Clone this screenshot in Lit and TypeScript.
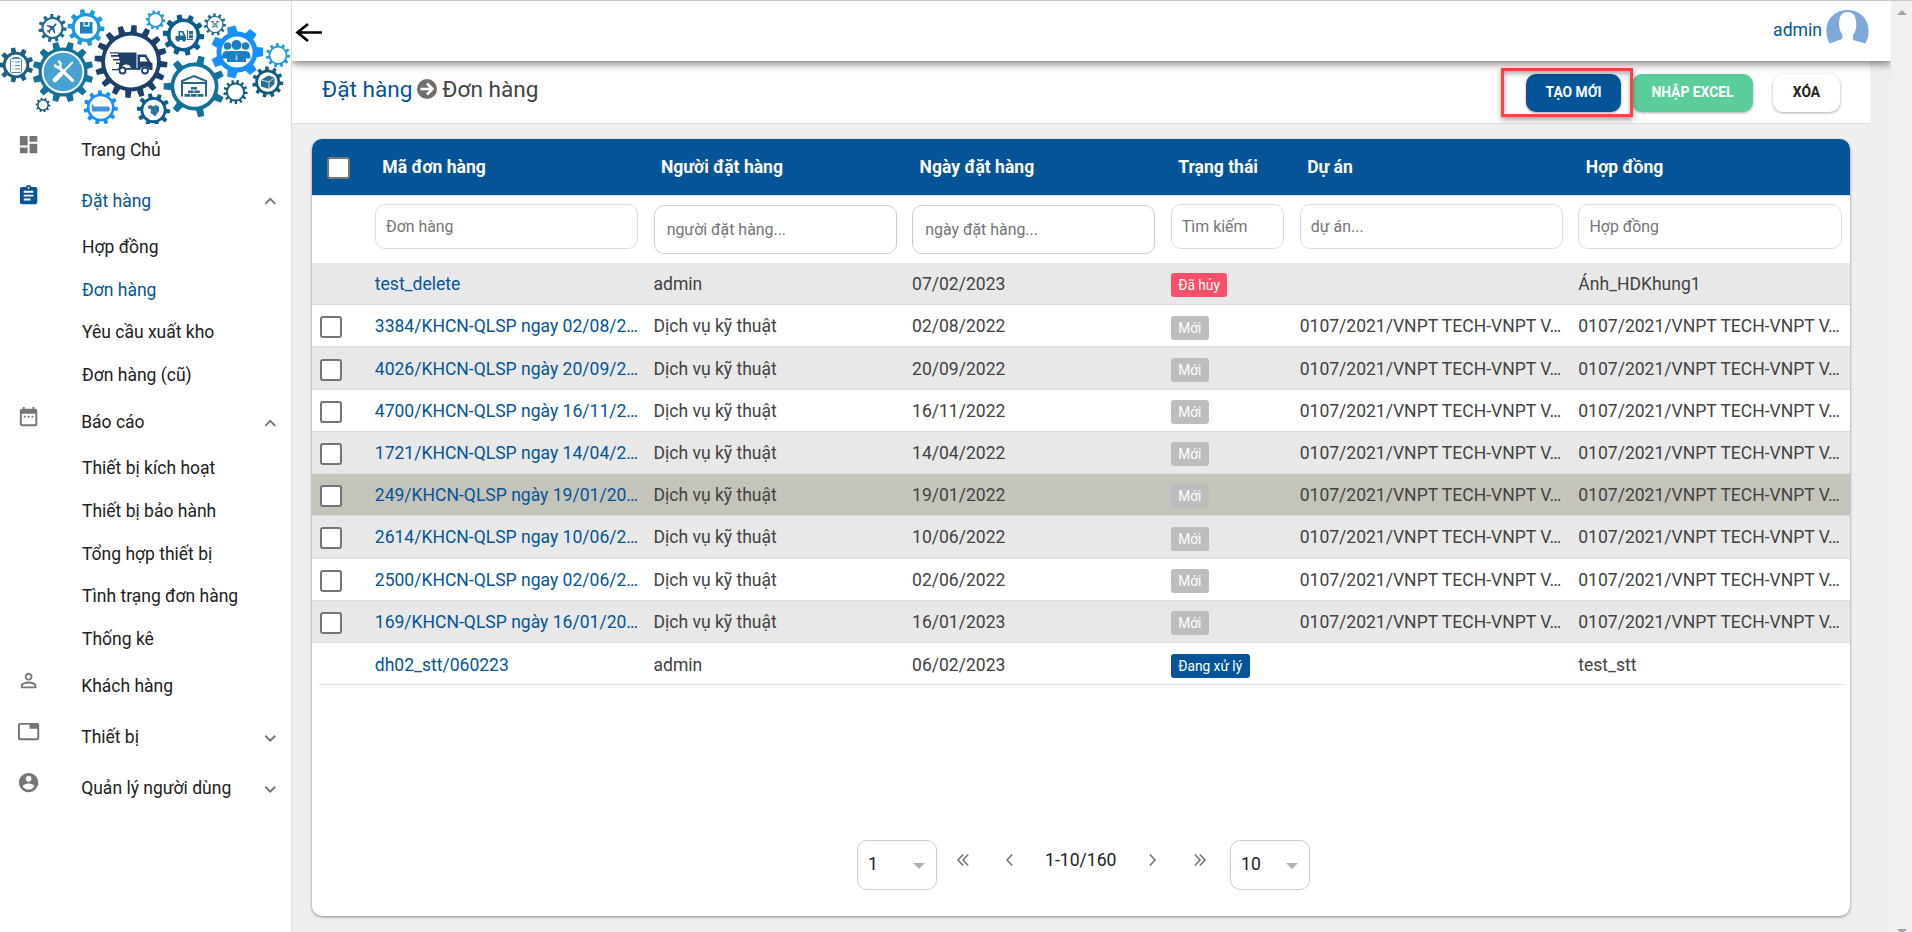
import { LitElement, html, svg, css, nothing } from "lit";
import { customElement, property } from "lit/decorators.js";
import { classMap } from "lit/directives/class-map.js";

/* ---------- logo ---------- */

interface Gear {
  x: number; y: number; r: number; body: number; hole: number; teeth: number; color: string; turn?: number; width?: number;
}

const GEARS: Gear[] = [
  { x: 16, y: 65, r: 17.5, body: 13.3, hole: 10.4, teeth: 9, color: "#1f5f86", turn: 20 },
  { x: 52.5, y: 28, r: 14.2, body: 11, hole: 9, teeth: 11, color: "#1f6a93" },
  { x: 86, y: 27.5, r: 18.5, body: 14.5, hole: 11.3, teeth: 10, color: "#1c9bdc" },
  { x: 63, y: 72, r: 30.5, body: 24.5, hole: 21.3, teeth: 12, color: "#14719a", turn: 15 },
  { x: 131, y: 61.5, r: 36.5, body: 29.8, hole: 26, teeth: 16, color: "#1c4068" },
  { x: 155.5, y: 20, r: 9.8, body: 7.6, hole: 6, teeth: 10, color: "#1c9bdc" },
  { x: 183.5, y: 35, r: 20.8, body: 16.5, hole: 13, teeth: 10, color: "#0b5c8c" },
  { x: 215, y: 24.5, r: 11.2, body: 8.6, hole: 7.4, teeth: 11, color: "#1f6a86" },
  { x: 237, y: 52, r: 26.5, body: 20.5, hole: 15.6, teeth: 7, color: "#1590ff", turn: 0 },
  { x: 278, y: 55.3, r: 12.2, body: 9.4, hole: 7.7, teeth: 11, color: "#1c9bdc" },
  { x: 194.5, y: 86.5, r: 31, body: 24, hole: 20.3, teeth: 7, color: "#14719a", turn: 26, width: 0.62 },
  { x: 235.5, y: 92, r: 12.2, body: 9.4, hole: 7.6, teeth: 13, color: "#14597e" },
  { x: 267.7, y: 82, r: 15.6, body: 12.4, hole: 9.8, teeth: 11, color: "#14597e" },
  { x: 100.7, y: 107.5, r: 17.2, body: 13.8, hole: 11.2, teeth: 11, color: "#1590ff" },
  { x: 153.5, y: 110, r: 16.8, body: 13, hole: 10.3, teeth: 10, color: "#0b5c8c" },
  { x: 43, y: 105, r: 7.4, body: 5.8, hole: 4.4, teeth: 10, color: "#14597e" },
];

function gearPath(g: Gear): string {
  const pts: string[] = [];
  const step = (Math.PI * 2) / g.teeth;
  const start = ((g.turn ?? 5) * Math.PI) / 180;
  const w = g.width ?? 1;
  const at = (r: number, a: number) => `${(g.x + r * Math.cos(a)).toFixed(2)} ${(g.y + r * Math.sin(a)).toFixed(2)}`;
  const arc = `A${g.body} ${g.body} 0 0 1 `;
  for (let i = 0; i < g.teeth; i++) {
    const a = start + i * step;
    pts.push(
      `${i ? arc : "M"}${at(g.body, a - step * 0.27 * w)}L${at(g.r, a - step * 0.18 * w)}L${at(g.r, a + step * 0.18 * w)}L${at(g.body, a + step * 0.27 * w)}`,
    );
  }
  pts.push(arc + at(g.body, start - step * 0.27 * w));
  const h = g.hole;
  return `${pts.join("")}ZM${g.x - h} ${g.y}a${h} ${h} 0 1 0 ${h * 2} 0a${h} ${h} 0 1 0 ${-h * 2} 0Z`;
}

@customElement("brand-logo")
export class BrandLogo extends LitElement {
  static styles = css`
    :host { display: block; height: 123px; overflow: hidden; }
    svg { display: block; }
  `;
  render() {
    return html`<svg width="291" height="123" viewBox="0 1 291 123">
      ${GEARS.map((g) => svg`<path d=${gearPath(g)} fill=${g.color} fill-rule="evenodd"></path>`)}
      <!-- clipboard -->
      <g fill="none" stroke="#4f86ad" stroke-width="1">
        <rect x="10.5" y="58.5" width="11" height="14" rx="1"></rect>
        <path d="M13 57.5h6M15 62h5M15 65.5h5M15 69h5M12.3 62h1M12.3 65.5h1M12.3 69h1"></path>
      </g>
      <!-- plane -->
      <path transform="translate(45.3 21) rotate(45 7 7) scale(.6)" fill="#1f5f86" d="M21 16v-2l-8-5V3.500c0-.83-.67-1.500-1.500-1.500S10 2.670 10 3.500V9l-8 5v2l8-2.500V19l-2 1.500V22l3.500-1 3.500 1v-1.500L13 19v-5.500l8 2.500z"></path>
      <!-- parcel -->
      <path fill="#1b7fc0" d="M80 22h3.500v4.500h6V22H92.500v11.500H80z"></path>
      <path fill="#1b7fc0" d="M84.500 22h3.700v3.200h-3.700z"></path>
      <!-- tools -->
      <circle cx="63" cy="72" r="19.300" fill="#45a2d3"></circle>
      <g stroke="#fff" stroke-linecap="round" fill="none">
        <path d="M59 67.500 72.500 80.500" stroke-width="3.200"></path>
        <path d="M55 65.500a3.800 3.800 0 0 0 5 1.200 3.800 3.800 0 0 0-1-5.200" stroke-width="2.600"></path>
        <path d="M72.300 62.500 63.500 71.500" stroke-width="1.800"></path>
        <path d="M61 74 54.800 80" stroke-width="4.600"></path>
      </g>
      <!-- truck -->
      <g fill="#1c4068">
        <path d="M118 52.500h18.500V68H131a5 5 0 0 0-9.500 0H119v-4h-3v-1.500h4v-2h-7V59h6v-2.300h-8V55h7z"></path>
        <path d="M137.500 54.500h8.500l4.500 7.500 2 1.500V70h-3a5 5 0 0 0-9.500 0h-2.500zM140 57v4.500h7.500L145 57z" fill-rule="evenodd"></path>
        <path d="M110 52.300h8v1.300h-8zM112 69h6v1.300h-6zM118 68h20v1.800h-20z"></path>
      </g>
      <g fill="#fff" stroke="#1c4068" stroke-width="1.800">
        <circle cx="122.500" cy="70.500" r="3"></circle><circle cx="145" cy="70.500" r="3"></circle>
      </g>
      <!-- forklift -->
      <path fill="#1a6b98" d="M175.500 36h3v-5h5l2.500 6v3h-10.500zM180 32.500v3h3.500l-1.200-3zM187 30h1v9h5v1h-6zM189 31h4v3.500h-4zM189 35.200h4v3h-4z" fill-rule="evenodd"></path>
      <circle cx="178" cy="40" r="1.700" fill="#1a6b98"></circle><circle cx="184" cy="40" r="1.700" fill="#1a6b98"></circle>
      <!-- drone -->
      <path fill="none" stroke="#5d8ba0" stroke-width="1.200" d="M210.500 21.500h3.500M216 21.500h3.500M212 22l3 2.500 3-2.500M213 28v-3h4v3M213.500 26.500h3"></path>
      <!-- people -->
      <g fill="#1b7fc0">
        <circle cx="236.500" cy="45" r="5"></circle><circle cx="227.500" cy="46" r="3.800"></circle><circle cx="245.500" cy="46" r="3.800"></circle>
        <path d="M222 57q0-6 5-6h18.500q5 0 5 6v1.500H246v3.500h-19v-3.500h-5z"></path>
      </g>
      <path d="M236.500 53l-1.200 6 1.200 2 1.200-2z" fill="#fff" opacity=".6"></path>
      <!-- warehouse -->
      <path fill="none" stroke="#26678c" stroke-width="2" d="M182 96.500V81l12-5 12 5v15.500M182 83h24"></path>
      <path fill="#26678c" d="M191 87h6v2.600h-6zM188 90.500h5.500v2.600H188zM194.300 90.500h5.500v2.600h-5.500zM184.500 94h5.500v2.800h-5.500zM190.700 94h6v2.800h-6zM197.500 94h6v2.800h-6z"></path>
      <!-- carton -->
      <path fill="#2a6f92" d="M261 80l7-4.500 6.500 2v6.500l-5.500 5-8-2.500z"></path>
      <path stroke="#fff" stroke-width=".8" fill="none" d="M261 80l8 2 5.500-4.500M269 82v7"></path>
      <!-- ship -->
      <path fill="#3e93dc" d="M91.500 104.500h2v2h15.500v1.500h1.500l-1.500 3.500H92z"></path>
      <!-- map -->
      <path fill="#2d7299" d="M148 106l3-1 2 1.500 3-1.500 3 2v4l-2.500 3.500-1.500 2-2-2-2.500-1.500.5-3.500-3-1.500z"></path>
    </svg>`;
  }
}

/* ---------- sidebar ---------- */

const ICONS: Record<string, string> = {
  dashboard: "M3 13h8V3H3v10zm0 8h8v-6H3v6zm10 0h8V11h-8v10zm0-18v6h8V3h-8z",
  assignment:
    "M19 3h-4.180C14.400 1.840 13.300 1 12 1c-1.300 0-2.400.84-2.820 2H5c-1.100 0-2 .9-2 2v14c0 1.100.9 2 2 2h14c1.100 0 2-.9 2-2V5c0-1.100-.9-2-2-2zm-7 0c.55 0 1 .45 1 1s-.45 1-1 1-1-.45-1-1 .45-1 1-1zm2 14H7v-2h7v2zm3-4H7v-2h10v2zm0-4H7V7h10v2z",
  date: "M9 11H7v2h2v-2zm4 0h-2v2h2v-2zm4 0h-2v2h2v-2zm2-7h-1V2h-2v2H8V2H6v2H5c-1.110 0-1.990.9-1.990 2L3 20c0 1.100.89 2 2 2h14c1.100 0 2-.9 2-2V6c0-1.100-.9-2-2-2zm0 16H5V9h14v11z",
  person:
    "M12 5.900c1.160 0 2.100.94 2.100 2.100s-.94 2.100-2.100 2.100S9.900 9.160 9.900 8s.94-2.100 2.100-2.100m0 9c2.970 0 6.100 1.460 6.100 2.100v1.100H5.900V17c0-.64 3.130-2.100 6.100-2.100M12 4C9.790 4 8 5.790 8 8s1.790 4 4 4 4-1.790 4-4-1.790-4-4-4zm0 9c-2.670 0-8 1.340-8 4v3h16v-3c0-2.660-5.330-4-8-4z",
  tab: "M21 3H3c-1.100 0-2 .9-2 2v14c0 1.100.9 2 2 2h18c1.100 0 2-.9 2-2V5c0-1.100-.9-2-2-2zm0 16H3V5h10v4h8v10z",
  account:
    "M12 2C6.480 2 2 6.480 2 12s4.480 10 10 10 10-4.480 10-10S17.520 2 12 2zm0 3c1.660 0 3 1.340 3 3s-1.340 3-3 3-3-1.340-3-3 1.340-3 3-3zm0 14.200c-2.500 0-4.710-1.280-6-3.220.03-1.990 4-3.080 6-3.080 1.990 0 5.970 1.090 6 3.080-1.290 1.940-3.500 3.220-6 3.220z",
  more: "M16.590 8.590 12 13.170 7.410 8.590 6 10l6 6 6-6z",
  less: "M12 8l-6 6 1.410 1.410L12 10.830l4.590 4.580L18 14z",
};

interface MenuEntry { label: string; icon: string; active?: boolean; open?: boolean; fold?: boolean; items?: { label: string; active?: boolean }[]; }

const MENU: MenuEntry[] = [
  { label: "Trang Chủ", icon: "dashboard" },
  {
    label: "Đặt hàng", icon: "assignment", active: true, open: true, fold: true,
    items: [{ label: "Hợp đồng" }, { label: "Đơn hàng", active: true }, { label: "Yêu cầu xuất kho" }, { label: "Đơn hàng (cũ)" }],
  },
  {
    label: "Báo cáo", icon: "date", open: true, fold: true,
    items: [{ label: "Thiết bị kích hoạt" }, { label: "Thiết bị bảo hành" }, { label: "Tổng hợp thiết bị" }, { label: "Tình trạng đơn hàng" }, { label: "Thống kê" }],
  },
  { label: "Khách hàng", icon: "person" },
  { label: "Thiết bị", icon: "tab", fold: true },
  { label: "Quản lý người dùng", icon: "account", fold: true },
];

@customElement("side-menu")
export class SideMenu extends LitElement {
  static styles = css`
    :host { display: block; font-size: 17.5px; color: #212121; }
    .entry { display: flex; align-items: center; height: 51.1px; padding: 0 9.500px 0 17px; box-sizing: border-box; }
    .icon { width: 23.2px; height: 23.2px; margin-bottom: 10px; fill: #757575; }
    .label { flex: 1; padding: 0 0 0 41px; line-height: 24px; }
    .chev { width: 22.500px; height: 22.500px; fill: #757575; margin-top: 2px; }
    .sub { height: 42.55px; padding-left: 82px; line-height: 42px; }
    .active { color: #045497; }
    .active .icon { fill: #045497; }
  `;
  render() {
    return html`${MENU.map((m) => html`
      <div class=${classMap({ entry: true, active: !!m.active })}>
        <svg class="icon" viewBox="0 0 24 24"><path d=${ICONS[m.icon]}></path></svg>
        <span class="label">${m.label}</span>
        ${m.fold ? html`<svg class="chev" viewBox="0 0 24 24"><path d=${m.open ? ICONS.less : ICONS.more}></path></svg>` : nothing}
      </div>
      ${(m.items ?? []).map((s) => html`<div class=${classMap({ sub: true, active: !!s.active })}>${s.label}</div>`)}
    `)}`;
  }
}

/* ---------- orders table ---------- */

interface Order { code: string; by: string; date: string; status: string; tone: string; project: string; contract: string; check: boolean; hover?: boolean; }

const VNPT = "0107/2021/VNPT TECH-VNPT V…";
const open = (code: string, date: string, hover = false): Order => ({
  code, by: "Dịch vụ kỹ thuật", date, status: "Mới", tone: "new", project: VNPT, contract: VNPT, check: true, hover,
});

const ORDERS: Order[] = [
  { code: "test_delete", by: "admin", date: "07/02/2023", status: "Đã hủy", tone: "cancelled", project: "", contract: "Ánh_HDKhung1", check: false },
  open("3384/KHCN-QLSP ngay 02/08/2…", "02/08/2022"),
  open("4026/KHCN-QLSP ngày 20/09/2…", "20/09/2022"),
  open("4700/KHCN-QLSP ngày 16/11/2…", "16/11/2022"),
  open("1721/KHCN-QLSP ngay 14/04/2…", "14/04/2022"),
  open("249/KHCN-QLSP ngày 19/01/20…", "19/01/2022", true),
  open("2614/KHCN-QLSP ngay 10/06/2…", "10/06/2022"),
  open("2500/KHCN-QLSP ngay 02/06/2…", "02/06/2022"),
  open("169/KHCN-QLSP ngày 16/01/20…", "16/01/2023"),
  { code: "dh02_stt/060223", by: "admin", date: "06/02/2023", status: "Đang xử lý", tone: "busy", project: "", contract: "test_stt", check: false },
];

const COLUMNS = [
  { title: "Mã đơn hàng", hint: "Đơn hàng" },
  { title: "Người đặt hàng", hint: "người đặt hàng...", tall: true },
  { title: "Ngày đặt hàng", hint: "ngày đặt hàng...", tall: true },
  { title: "Trạng thái", hint: "Tìm kiếm" },
  { title: "Dự án", hint: "dự án..." },
  { title: "Hợp đồng", hint: "Hợp đồng" },
];

@customElement("order-table")
export class OrderTable extends LitElement {
  static styles = css`
    :host { display: block; font-size: 17.550px; color: #424242; }
    .row { display: grid; grid-template-columns: 55.3px 278.7px 258.6px 258.6px 129px 278.6px 279.2px; box-sizing: border-box; }
    .head { height: 56px; background: #045497; color: #fff; font-weight: 700; align-items: center; }
    .head > span { padding-left: 15px; }
    .head .box { margin: 1px 0 0 15px; width: 23px; }
    .filters { height: 68px; border-top: 1px solid #ddd; align-items: start; padding-top: 8px; }
    .field { margin: 0 7.700px; height: 45px; box-sizing: border-box; border: 1px solid #ddd; border-radius: 10px; padding: 0 10px; font-size: 15.900px; line-height: 43px; color: #757575; }
    .field.tall { height: 49px; margin-top: 1px; padding: 0 12px; line-height: 47px; border-color: #ccc; }
    .line { height: 42.220px; border-bottom: 1px solid #ddd; align-items: center; }
    .line:nth-child(odd) { background: #e8e8e8; }
    .line.hover { background: #c4c4bb; }
    .line:last-child { border-bottom: 0; background: linear-gradient(#ddd, #ddd) 7px 100% / 1524px 1px no-repeat; }
    .cell { padding: 1px 0 0 7.500px; white-space: nowrap; line-height: 26px; }
    .link { color: #045497; }
    .box { display: block; width: 22px; height: 22px; box-sizing: border-box; border: 2px solid #757575; border-radius: 3px; background: #fff; }
    .line .box { margin: 3px 0 0 8px; }
    .badge { display: inline-block; height: 24px; line-height: 24px; padding: 0 7.500px; border-radius: 3px; color: #fff; font-size: 13.750px; vertical-align: middle; margin-top: 0; }
    .new { background: #bdbdbd; }
    .cancelled { background: #f7506b; }
    .busy { background: #045497; }
  `;
  render() {
    return html`
      <div class="row head"><i class="box"></i>${COLUMNS.map((c) => html`<span>${c.title}</span>`)}</div>
      <div class="row filters"><i></i>${COLUMNS.map((c) => html`<div class=${classMap({ field: true, tall: !!c.tall })}>${c.hint}</div>`)}</div>
      <div>
        ${ORDERS.map((o) => html`
          <div class=${classMap({ row: true, line: true, hover: !!o.hover })}>
            ${o.check ? html`<i class="box"></i>` : html`<i></i>`}
            <span class="cell link">${o.code}</span>
            <span class="cell">${o.by}</span>
            <span class="cell">${o.date}</span>
            <span class="cell"><span class="badge ${o.tone}">${o.status}</span></span>
            <span class="cell">${o.project}</span>
            <span class="cell">${o.contract}</span>
          </div>`)}
      </div>`;
  }
}

@customElement("page-nav")
export class PageNav extends LitElement {
  @property() page = "1";
  @property() size = "10";
  static styles = css`
    :host { display: flex; justify-content: center; font-size: 17.6px; color: #212121; padding-left: 5px; }
    .select { display: flex; justify-content: space-between; width: 80px; height: 50px; box-sizing: border-box; border: 1px solid #ccc; border-radius: 10px; padding: 0 11px 0 10px; line-height: 46px; }
    .arrow { width: 0; border: 6.500px solid transparent; border-top: 6.500px solid #b0b0b0; border-bottom: 0; align-self: start; margin-top: 22px; }
    .nav { display: flex; width: 293px; height: 40px; }
    .nav svg { width: 24px; height: 24px; fill: none; stroke: #757575; stroke-width: 1.600; }
    .nav svg, .nav span { margin-top: 8px; }
    .nav svg:nth-child(1) { margin-left: 14px; }
    .nav svg:nth-child(2) { margin-left: 22px; }
    .nav svg:nth-child(4) { margin-left: 24px; }
    .nav svg:nth-child(5) { margin-left: 23px; }
    .nav span { width: 72px; margin-left: 24px; line-height: 24px; white-space: nowrap; }
  `;
  render() {
    return html`
      <div class="select"><span>${this.page}</span><i class="arrow"></i></div>
      <div class="nav">
        <svg viewBox="0 0 24 24"><path d="M12.200 6.500 7 12l5.200 5.500M17.200 6.500 12 12l5.200 5.500"></path></svg>
        <svg viewBox="0 0 24 24"><path d="M15.200 6.500 10 12l5.200 5.500"></path></svg>
        <span>1-10/160</span>
        <svg viewBox="0 0 24 24"><path d="M8.800 6.500 14 12l-5.200 5.500"></path></svg>
        <svg viewBox="0 0 24 24"><path d="M6.800 6.500 12 12l-5.200 5.500M11.800 6.500 17 12l-5.200 5.500"></path></svg>
      </div>
      <div class="select"><span>${this.size}</span><i class="arrow"></i></div>`;
  }
}

/* ---------- page ---------- */

@customElement("app-root")
export class AppRoot extends LitElement {
  static styles = css`
    :host { display: flex; width: 1912px; height: 932px; overflow: hidden; box-sizing: border-box; border-top: 1px solid #c8c8c8; background: #efefef; font-family: Roboto, "Noto Sans", sans-serif; }
    .side { width: 291px; background: #fff; border-right: 1px solid #ddd; flex: none; padding-top: 0; }
    .main { width: 1599px; display: flex; flex-direction: column; }
    .top { position: relative; z-index: 1; display: flex; justify-content: space-between; height: 60px; box-sizing: border-box; background: #fff; box-shadow: 0 2px 9px rgba(0, 0, 0, .6); clip-path: inset(0 0 -20px 0); padding-right: 22px; }
    .back { margin: 20px 0 0 3px; width: 29px; height: 24px; }
    .user { display: flex; color: #045497; font-size: 17.6px; line-height: 59px; gap: 4px; }
    .avatar { width: 43px; height: 34px; margin-top: 9px; }
    .bar { display: flex; justify-content: space-between; width: 1578px; height: 63px; box-sizing: border-box; background: #fff; border-bottom: 1px solid #ddd; padding: 0 30px 0 30px; }
    .crumbs { display: flex; align-items: center; gap: 5px; height: 56px; font-size: 22.600px; color: #424242; }
    .crumbs a { color: #045497; }
    .crumbs svg { width: 20px; height: 20px; }
    .actions { display: flex; position: relative; padding-top: 13px; }
    .btn { height: 38px; border-radius: 10px; box-sizing: border-box; font-size: 13.850px; line-height: 37px; font-weight: 700; text-align: center; color: #fff; box-shadow: 0 1px 3px rgba(0, 0, 0, .35); }
    .create { width: 95px; background: #045497; }
    .import { width: 121px; margin-left: 11px; background: #5acd9a; }
    .delete { width: 67px; margin-left: 20px; background: #fff; color: #212121; }
    .mark { position: absolute; left: -25px; top: 7px; width: 132px; height: 49px; box-sizing: border-box; border: 3px solid #f94444; box-shadow: 0 3px 5px rgba(0, 0, 0, .35), inset 0 3px 5px rgba(0, 0, 0, .3); }
    .card { display: flex; flex-direction: column; justify-content: space-between; width: 1538px; height: 777px; margin: 15px 0 0 20px; box-sizing: border-box; background: #fff; border-radius: 10px; overflow: hidden; box-shadow: 0 1px 3px rgba(0, 0, 0, .45); padding-bottom: 26px; }
    .scroll { width: 21px; background: #f0f0f0; display: flex; flex-direction: column; align-items: center; justify-content: space-between; }
    .up { border: 5px solid transparent; border-bottom-color: #a3a3a3; border-top: 0; margin-top: 9px; }
    .down { border: 5px solid transparent; border-top-color: #a3a3a3; border-bottom: 0; margin-bottom: -2px; }
  `;
  render() {
    return html`
      <div class="side"><brand-logo></brand-logo><side-menu></side-menu></div>
      <div class="main">
        <div class="top">
          <svg class="back" viewBox="0 0 29 24"><path d="M27 11.500H3M13 3 2.500 11.500 13 20" fill="none" stroke="#000" stroke-width="2.700"></path></svg>
          <div class="user"><span>admin</span>
            <svg class="avatar" viewBox="0 0 43 34">
              <path fill="#7fa7d8" d="M3.500 33.500C-5 16 5 0 21.500 0S48 16 39.500 33.500L27 30v-5c4-5 4-12 2-18-1-4-5-5-7.500-5s-6 1-7.500 5c-2 6-1 13 2.500 18L16 29z"></path>
            </svg>
          </div>
        </div>
        <div class="bar">
          <div class="crumbs"><a>Đặt hàng</a>
            <svg viewBox="0 0 20 20"><circle cx="10" cy="10" r="10" fill="#6e6e6e"></circle><path d="M3.500 10H14M10 4.500 15.500 10 10 15.500" fill="none" stroke="#fff" stroke-width="2.600"></path></svg>
            <span>Đơn hàng</span>
          </div>
          <div class="actions">
            <div class="btn create">TẠO MỚI</div>
            <div class="btn import">NHẬP EXCEL</div>
            <div class="btn delete">XÓA</div>
            <div class="mark"></div>
          </div>
        </div>
        <div class="card"><order-table></order-table><page-nav></page-nav></div>
      </div>
      <div class="scroll"><i class="up"></i><i class="down"></i></div>`;
  }
}
